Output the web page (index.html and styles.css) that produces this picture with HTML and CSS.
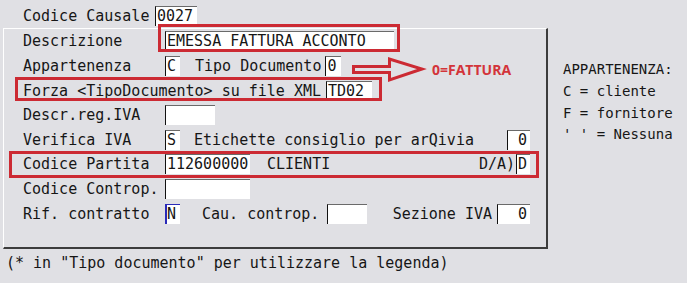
FILE: index.html
```html
<!DOCTYPE html>
<html lang="it">
<head>
  <meta charset="UTF-8">
  <title>Codice Causale</title>
  <link rel="stylesheet" href="styles.css">
</head>
<body>
  <div class="screen">
    <div class="row top-row">
      <span class="lbl lbl-causale">Codice Causale</span>
      <span class="fld f-causale">0027</span>
    </div>
    <div class="main">
      <div class="panel">
        <div class="row">
          <span class="lbl">Descrizione</span>
          <span class="fld f-desc mark mark-desc">EMESSA FATTURA ACCONTO</span>
        </div>
        <div class="row">
          <span class="lbl">Appartenenza</span>
          <span class="fld f-1">C</span>
          <span class="gap-tipo">Tipo Documento</span>
          <span class="fld f-tipo gap-4">0</span>
        </div>
        <div class="row mark mark-forza">
          <span>Forza &lt;TipoDocumento&gt; su file XML</span>
          <span class="fld f-td gap-5">TD02</span>
        </div>
        <div class="row">
          <span class="lbl">Descr.reg.IVA</span>
          <span class="fld f-reg"></span>
        </div>
        <div class="row">
          <span class="lbl">Verifica IVA</span>
          <span class="fld f-1">S</span>
          <span class="gap-etich">Etichette consiglio per arQivia</span>
          <span class="fld f-2 num push">0</span>
        </div>
        <div class="row mark mark-partita">
          <span class="lbl">Codice Partita</span>
          <span class="fld f-9">112600000</span>
          <span class="gap-clienti">CLIENTI</span>
          <span class="push">D/A)</span>
          <span class="fld f-d gap-1">D</span>
        </div>
        <div class="row">
          <span class="lbl">Codice Controp.</span>
          <span class="fld f-9"></span>
        </div>
        <div class="row">
          <span class="lbl">Rif. contratto</span>
          <span class="fld f-1 focus">N</span>
          <span class="gap-cau">Cau. controp.</span>
          <span class="fld f-cau gap-8"></span>
          <span class="push">Sezione IVA</span>
          <span class="fld f-3 num gap-5">0</span>
        </div>
      </div>
      <div class="legend">
        <div class="legend-line">APPARTENENZA:</div>
        <div class="legend-line">C = cliente</div>
        <div class="legend-line">F = fornitore</div>
        <div class="legend-line">' ' = Nessuna</div>
      </div>
    </div>
    <div class="footer">(* in "Tipo documento" per utilizzare la legenda)</div>

    <svg class="arrow" width="82" height="32" viewBox="348 54 82 32">
      <polygon points="353.5,66.5 389.5,66.5 389.5,59 422,69 389.5,80 389.5,72.5 353.5,72.5" fill="none" stroke="#cc2a33" stroke-width="3"/>
    </svg>
    <span class="note">0=FATTURA</span>
  </div>
</body>
</html>
```

FILE: styles.css
```css
body {
  margin: 0;
  background-color: #e0e0e4;
  font-family: "DejaVu Sans Mono", monospace;
  font-size: 15px;
  color: #161616;
}
.screen {
  position: relative;
  width: 687px;
  height: 283px;
  padding: 3.5px 0 0 3px;
  box-sizing: border-box;
  overflow: hidden;
}
.row {
  display: flex;
  align-items: center;
  height: 24.6px;
  white-space: pre;
}
.top-row {
  padding-left: 20px;
}
.lbl {
  width: 142px;
  flex: none;
}
.lbl-causale {
  width: 132px;
}

/* campi */
.fld {
  flex: none;
  box-sizing: border-box;
  height: 20px;
  line-height: 19px;
  background-color: #fff;
  border-top: 1px solid #6a6a6a;
  border-left: 1px solid #111;
  padding-left: 1px;
}
.num {
  text-align: right;
  padding-right: 3px;
}
.focus {
  border-top-color: #2a2ab8;
  border-left: 2px solid #2a2ab8;
  padding-left: 0;
}
.f-causale { width: 42px; }
.f-desc { width: 229px; }
.f-1 { width: 15px; }
.f-2 { width: 23px; }
.f-3 { width: 33px; }
.f-d { width: 14px; }
.f-tipo { width: 16px; }
.f-td { width: 46px; }
.f-reg { width: 50px; }
.f-9 { width: 85px; }
.f-cau { width: 40px; }

.gap-1 { margin-left: 1px; }
.gap-4 { margin-left: 4px; }
.gap-5 { margin-left: 5px; }
.gap-8 { margin-left: 8px; }
.gap-tipo { margin-left: 15px; }
.gap-etich { margin-left: 14px; }
.gap-clienti { margin-left: 17px; }
.gap-cau { margin-left: 22px; }
.push { margin-left: auto; }

.main {
  display: flex;
  align-items: flex-start;
}
.panel {
  width: 545px;
  box-sizing: border-box;
  border-top: 1px solid #fff;
  border-left: 1px solid #fff;
  border-right: 2px solid #3c3c3c;
  border-bottom: 2px solid #3c3c3c;
  padding: 0 0 21px 19px;
}
.panel .row {
  padding-right: 16px;
}
.legend {
  margin: 31px 0 0 15px;
  font-size: 14px;
  line-height: 21.7px;
}
.legend-line {
  white-space: pre;
}
.footer {
  padding-left: 3px;
  margin-top: 2px;
  line-height: 24.6px;
}

/* riquadri rossi */
.mark {
  position: relative;
}
.mark::after {
  content: "";
  position: absolute;
  border: 3px solid #cc2a33;
}
.mark-desc::after { inset: -8px -6px -1px -8px; }
.mark-forza::after { inset: -1px 164px 2px -8px; }
.mark-partita::after { inset: -1px 7px -1px -14px; }

.arrow {
  position: absolute;
  left: 348px;
  top: 54px;
}
.note {
  position: absolute;
  left: 432px;
  top: 60px;
  font-family: "Open Sans", sans-serif;
  font-weight: 700;
  font-size: 14px;
  line-height: 20px;
  color: #d3343a;
}
```
